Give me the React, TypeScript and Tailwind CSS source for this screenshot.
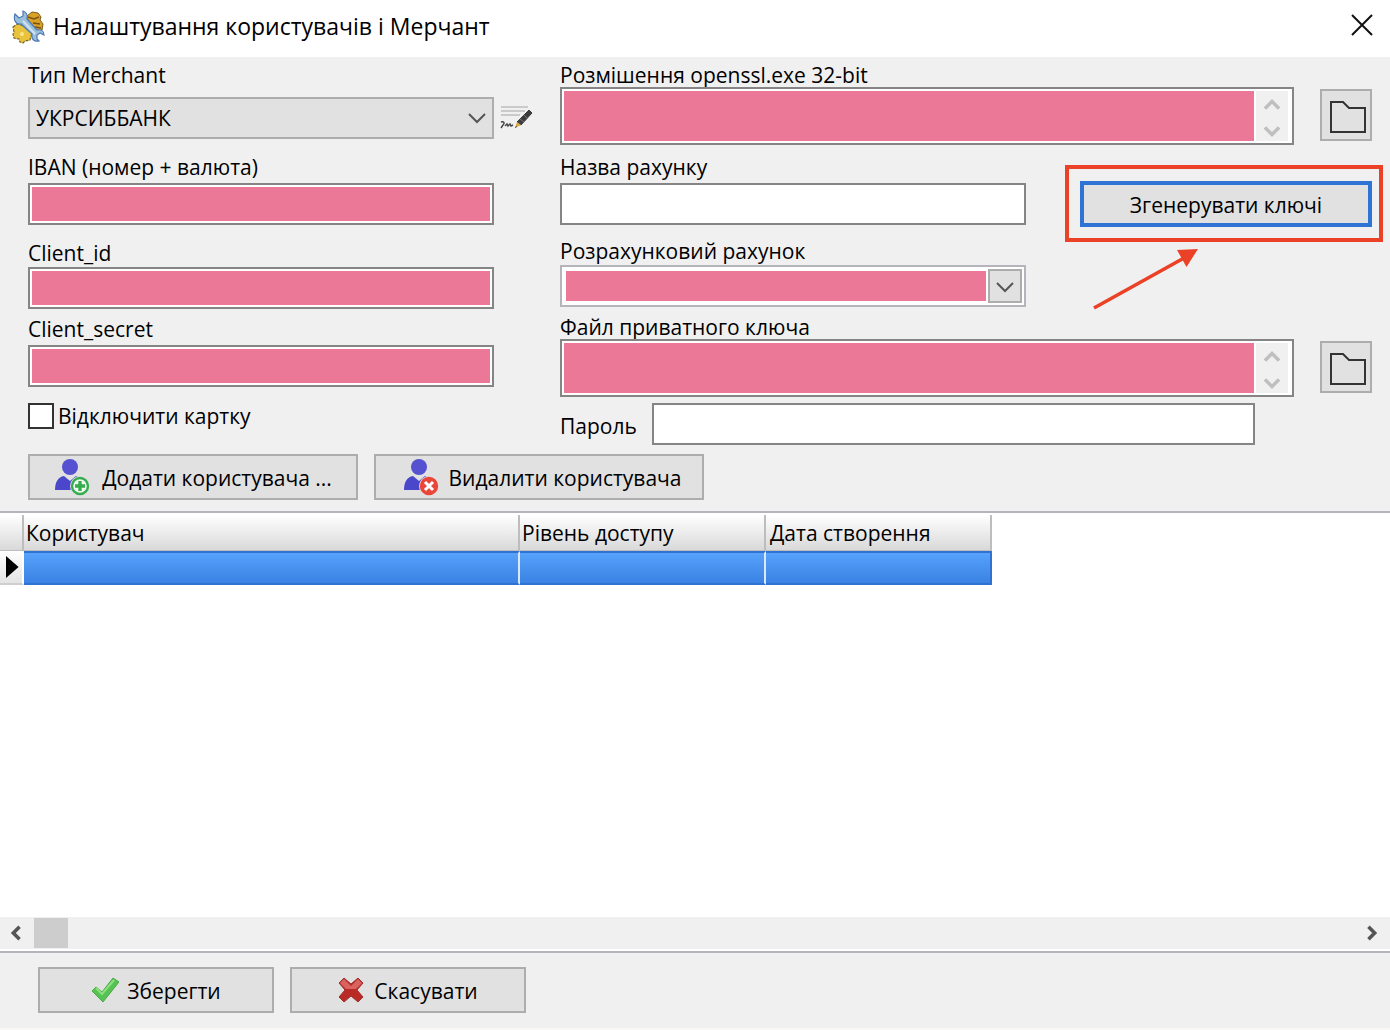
import React, { useState } from "react";

const labelClass = "block h-6 text-[21px] leading-6 whitespace-nowrap";
const fieldClass =
  "block w-full h-[42px] px-2 border-2 border-[#858585] bg-white text-[21px] focus:outline-none";
const maskedClass =
  "block w-full h-[42px] px-2 border-2 border-[#858585] bg-[#ea7896] shadow-[inset_0_0_0_2px_#fff] text-[21px] focus:outline-none";
const buttonClass =
  "flex items-center justify-center border-2 border-[#adadad] bg-[#e1e1e1] text-[21px] whitespace-nowrap";

function AppIcon() {
  return (
    <svg viewBox="0 0 34 34" className="w-[34px] h-[34px]" aria-hidden="true">
      <path d="M16 6l5-4 6 1 3 4-1 3 3 4-1 6-5 2-8-7z" fill="#d9a227" stroke="#7a5a18" strokeWidth="1" />
      <path d="M17 7l6 2 5-2M22 13l7 1M24 17l6 1" stroke="#7a5215" strokeWidth="1.5" fill="none" />
      <path d="M2 17l4-3 8 2 7 7-2 7-5 1-2 2-3-1-1-3-5-1-1-4 1-2z" fill="#e9c33c" stroke="#7b6522" strokeWidth="1.2" strokeDasharray="3 1" />
      <circle cx="11" cy="24" r="2" fill="#f8e48a" />
      <path
        d="M4 4l4 4 4-2V1c3 1 5 4 4 8l10 11c4-1 7 1 7 5l-4-2-3 2v4l2 2c-5 1-8-2-7-7L10 14c-5 1-8-4-6-10z"
        fill="#9bbfda"
        stroke="#4d79b5"
        strokeWidth="1.2"
      />
      <path d="M12 11l12 13" stroke="#cfe4ef" strokeWidth="2" />
    </svg>
  );
}

function SignIcon() {
  return (
    <svg viewBox="0 0 34 28" className="w-[34px] h-7" aria-hidden="true">
      <path d="M1 3h27M1 7h24M1 11h19" stroke="#bdbdbd" strokeWidth="1.6" />
      <path d="M1 18c3-1 4 1 2 3l-2 3M5 22l2-2 1 2 2-2 1 2 2-1" stroke="#444" strokeWidth="1.4" fill="none" />
      <path d="M29 6l3 3-11 12-4-3z" fill="#3c3c3c" stroke="#3c3c3c" strokeWidth="1" />
      <path d="M20 15l4 3M24 11l3 3" stroke="#777" strokeWidth="1" />
      <path d="M17 18l4 3-6 3z" fill="#d9a545" />
      <path d="M16 22l-1 2 2-1z" fill="#333" />
    </svg>
  );
}

function FolderIcon() {
  return (
    <svg viewBox="0 0 38 34" className="w-[38px] h-[34px]" aria-hidden="true">
      <path d="M2 2h12l6 6h16v24H2z" fill="none" stroke="#333" strokeWidth="2" />
    </svg>
  );
}

function UserIcon({ kind }: { kind: "add" | "remove" }) {
  return (
    <svg viewBox="0 0 38 40" className="w-[38px] h-10" aria-hidden="true">
      <ellipse cx="16" cy="10" rx="8" ry="8" fill="#5551d0" />
      <path d="M1 33c0-8 3-13 9-14l6 5 6-5c3 1 5 3 6 7L18 33z" fill="#4b47cb" />
      <circle cx="26" cy="29" r="10" fill="#e1e1e1" />
      <circle cx="26" cy="29" r="8" fill={kind === "add" ? "#eefaf0" : "#e8483c"} stroke={kind === "add" ? "#35ad4e" : "#ea4537"} strokeWidth="2.4" />
      {kind === "add" ? (
        <path d="M26 24v10M21 29h10" stroke="#35ad4e" strokeWidth="3.4" />
      ) : (
        <path d="M22 25l8 8M30 25l-8 8" stroke="#fff" strokeWidth="3" />
      )}
    </svg>
  );
}

function Chevron({ className, d, width = 2 }: { className: string; d: string; width?: number }) {
  return (
    <svg viewBox="0 0 18 18" className={className} fill="none" stroke="currentColor" strokeWidth={width} aria-hidden="true">
      <path d={d} />
    </svg>
  );
}

const DOWN = "M1 5l8 8 8-8";

function PathField({ id, label, value, onChange }: { id: string; label: string; value: string; onChange: (v: string) => void }) {
  return (
    <div>
      <label htmlFor={id} className={labelClass}>{label}</label>
      <div className="flex items-start gap-[26px]">
        <div className="flex flex-1 h-[58px] border-2 border-[#858585] bg-white p-0.5">
          <textarea
            id={id}
            value={value}
            onChange={(e) => onChange(e.target.value)}
            className="flex-1 h-full resize-none bg-[#ea7896] px-1 text-[21px] focus:outline-none"
          />
          <div className="flex flex-col items-center justify-between w-8 mx-0.5 pt-1.5 pb-0.5 bg-[#f0f0f0] text-[#bfbfbf]">
            <button type="button" aria-label="Вгору" className="block">
              <Chevron className="w-4 h-4" d="M1 13l8-8 8 8" width={4} />
            </button>
            <button type="button" aria-label="Вниз" className="block">
              <Chevron className="w-4 h-4" d="M1 5l8 8 8-8" width={4} />
            </button>
          </div>
        </div>
        <button type="button" aria-label="Огляд" className={`${buttonClass} w-[52px] h-[52px] mt-0.5 pl-1 pt-1`}>
          <FolderIcon />
        </button>
      </div>
    </div>
  );
}

export default function App() {
  const [merchant, setMerchant] = useState("УКРСИББАНК");
  const [iban, setIban] = useState("");
  const [clientId, setClientId] = useState("");
  const [clientSecret, setClientSecret] = useState("");
  const [cardDisabled, setCardDisabled] = useState(false);
  const [opensslPath, setOpensslPath] = useState("");
  const [accountName, setAccountName] = useState("");
  const [account, setAccount] = useState("");
  const [keyPath, setKeyPath] = useState("");
  const [password, setPassword] = useState("");

  return (
    <div className="flex flex-col min-h-screen bg-[#f0f0f0] text-black font-['Open_Sans','Noto_Sans',sans-serif]">
      <header className="flex items-center justify-between h-[57px] pl-[11px] pr-4 pb-1 bg-white">
        <div className="flex items-center gap-2">
          <AppIcon />
          <h1 className="text-[23px]">Налаштування користувачів і Мерчант</h1>
        </div>
        <button type="button" aria-label="Закрити" className="mb-1">
          <svg viewBox="0 0 24 24" className="w-6 h-6" stroke="#111" strokeWidth="2" aria-hidden="true">
            <path d="M2 2l20 20M22 2L2 22" />
          </svg>
        </button>
      </header>

      <section className="pt-1.5 pb-[11px]">
        <div className="grid grid-cols-[504fr_812fr] gap-7 pl-7 pr-[18px]">
          <div className="pr-[38px]">
            <label htmlFor="merchant" className={labelClass}>Тип Merchant</label>
            <div className="flex items-center gap-1.5 mt-2.5 -mr-[38px]">
              <div className="relative flex-1">
                <select
                  id="merchant"
                  value={merchant}
                  onChange={(e) => setMerchant(e.target.value)}
                  className="block w-full h-[42px] pl-1.5 pt-0.5 appearance-none border-2 border-[#adadad] bg-[#e1e1e1] text-[21px] focus:outline-none"
                >
                  <option value="УКРСИББАНК">УКРСИББАНК</option>
                </select>
                <Chevron className="absolute right-2 top-3 w-[18px] h-[18px] text-[#555] pointer-events-none" d={DOWN} />
              </div>
              <button type="button" aria-label="Підпис" className="w-8">
                <SignIcon />
              </button>
            </div>

            <label htmlFor="iban" className={`${labelClass} mt-4 mb-1`}>IBAN (номер + валюта)</label>
            <input id="iban" value={iban} onChange={(e) => setIban(e.target.value)} className={maskedClass} />

            <label htmlFor="client-id" className={`${labelClass} mt-4 mb-0.5`}>Client_id</label>
            <input id="client-id" value={clientId} onChange={(e) => setClientId(e.target.value)} className={maskedClass} />

            <label htmlFor="client-secret" className={`${labelClass} mt-2 mb-1`}>Client_secret</label>
            <input id="client-secret" value={clientSecret} onChange={(e) => setClientSecret(e.target.value)} className={maskedClass} />

            <label className="flex items-center gap-1 mt-4 text-[21px] leading-[26px]">
              <input
                type="checkbox"
                checked={cardDisabled}
                onChange={(e) => setCardDisabled(e.target.checked)}
                className="w-[26px] h-[26px] appearance-none border-2 border-[#333] bg-white checked:bg-[#333]"
              />
              Відключити картку
            </label>
          </div>

          <div>
            <PathField id="openssl" label="Розмішення openssl.exe 32-bit" value={opensslPath} onChange={setOpensslPath} />

            <label htmlFor="account-name" className={`${labelClass} mt-2.5 mb-1`}>Назва рахунку</label>
            <div className="flex items-center gap-[54px] h-[42px]">
              <div className="flex-[466_1_0%]">
                <input id="account-name" value={accountName} onChange={(e) => setAccountName(e.target.value)} className={fieldClass} />
              </div>
              <div className="relative flex-[292_1_0%]">
                <button type="button" className="w-full h-[46px] pt-1 border-4 border-[#2f74d4] bg-[#e1e1e1] text-[21px]">
                  Згенерувати ключі
                </button>
                <div className="absolute -top-4 -bottom-[15px] -left-[15px] -right-[11px] border-4 border-[#eb4227] pointer-events-none" />
                <svg viewBox="0 0 110 66" className="absolute left-3 top-[66px] w-[110px] h-[66px] pointer-events-none" aria-hidden="true">
                  <path d="M2 61L92 11" stroke="#eb4227" strokeWidth="3.6" />
                  <path d="M106 2L85 3l9.500 17z" fill="#eb4227" />
                </svg>
              </div>
            </div>

            <label htmlFor="account" className={`${labelClass} mt-3.5 mb-0.5`}>Розрахунковий рахунок</label>
            <div className="grid grid-cols-[466fr_292fr] gap-[54px]">
              <div className="flex h-[42px] gap-0.5 border-2 border-[#b4b4ba] bg-white p-0.5">
                <input
                  id="account"
                  value={account}
                  onChange={(e) => setAccount(e.target.value)}
                  className="flex-1 min-w-0 m-0.5 mr-0 px-1 bg-[#ea7896] text-[21px] focus:outline-none"
                />
                <button type="button" aria-label="Обрати рахунок" className={`${buttonClass} w-[34px] pt-0.5 text-[#555]`}>
                  <Chevron className="w-[18px] h-[18px]" d={DOWN} />
                </button>
              </div>
            </div>

            <div className="mt-2">
              <PathField id="key-file" label="Файл приватного ключа" value={keyPath} onChange={setKeyPath} />
            </div>

            <div className="flex items-center mt-1.5 pr-[117px]">
              <label htmlFor="password" className="w-[92px] pt-1.5 text-[21px]">Пароль</label>
              <input
                id="password"
                type="password"
                value={password}
                onChange={(e) => setPassword(e.target.value)}
                className={`${fieldClass} flex-1`}
              />
            </div>
          </div>
        </div>

        <div className="flex gap-4 mt-[9px] pl-7">
          <button type="button" className={`${buttonClass} w-[330px] h-[46px] gap-2.5`}>
            <UserIcon kind="add" />
            <span className="pt-1">Додати користувача ...</span>
          </button>
          <button type="button" className={`${buttonClass} w-[330px] h-[46px] gap-2 pl-1.5`}>
            <UserIcon kind="remove" />
            <span className="pt-1">Видалити користувача</span>
          </button>
        </div>
      </section>

      <section className="flex flex-col flex-1 border-y-2 border-[#b4b4ba] bg-white">
        <div className="flex-1 pt-0.5">
          <table className="w-[992px] table-fixed border-separate border-spacing-0 text-[21px]">
            <thead>
              <tr className="h-9 bg-linear-to-b from-white to-[#d8d8d8] text-left">
                <th className="w-6 border-r-2 border-b border-[#bdbdbd]" aria-label="Позначка" />
                <th className="w-[496px] px-0.5 py-0 border-r-2 border-b border-[#bdbdbd] font-normal leading-8">Користувач</th>
                <th className="w-[246px] px-0.5 py-0 border-r-2 border-b border-[#bdbdbd] font-normal leading-8">Рівень доступу</th>
                <th className="px-1 py-0 border-r-2 border-b border-[#bdbdbd] font-normal leading-8">Дата створення</th>
              </tr>
            </thead>
            <tbody>
              <tr className="h-[34px]">
                <td className="p-0 border-b-2 border-r-2 border-b-[#cfcfcf] border-r-white bg-linear-to-b from-white to-[#e4e4e4]">
                  <svg viewBox="0 0 10 24" className="ml-1.5 w-3.5 h-6" preserveAspectRatio="none" aria-hidden="true">
                    <path d="M0 1l9 11-9 11z" />
                  </svg>
                </td>
                <td className="border-y-2 border-r-2 border-y-[#2f72d2] border-r-[#dbe8fa] bg-linear-to-b from-[#57a2fa] to-[#3a82e4]" />
                <td className="border-y-2 border-r-2 border-y-[#2f72d2] border-r-[#dbe8fa] bg-linear-to-b from-[#57a2fa] to-[#3a82e4]" />
                <td className="border-y-2 border-r-2 border-y-[#2f72d2] border-r-[#2f72d2] bg-linear-to-b from-[#57a2fa] to-[#3a82e4]" />
              </tr>
            </tbody>
          </table>
        </div>
        <div className="flex items-center h-8 mb-0.5 pl-2 pr-2.5 bg-[#f0f0f0] text-[#555]">
          <button type="button" aria-label="Ліворуч">
            <Chevron className="w-4 h-4" d="M13 2L6 9l7 7" width={4} />
          </button>
          <div className="w-[34px] h-[30px] ml-2.5 bg-[#cdcdcd]" />
          <button type="button" aria-label="Праворуч" className="ml-auto">
            <Chevron className="w-4 h-4" d="M5 2l7 7-7 7" width={4} />
          </button>
        </div>
      </section>

      <footer className="flex gap-4 pl-[38px] pt-3.5 pb-[15px] border-b-2 border-[#faf6f3]">
        <button type="button" className={`${buttonClass} w-[236px] h-[46px] gap-2`}>
          <svg viewBox="0 0 28 26" className="w-7 h-[26px]" aria-hidden="true">
            <path d="M1 14l4-4 6 5L22 1l6 4-16 20z" fill="#57c254" stroke="#47ad45" strokeWidth="1" />
            <path d="M5 11l6 6L23 3" stroke="#8be07c" strokeWidth="2" fill="none" />
          </svg>
          <span className="pt-1">Зберегти</span>
        </button>
        <button type="button" className={`${buttonClass} w-[236px] h-[46px] gap-2.5`}>
          <svg viewBox="0 0 26 26" className="w-[26px] h-[26px]" aria-hidden="true">
            <path d="M6 1l7 6 7-6 5 5-6 7 6 7-5 5-7-6-7 6-5-5 6-7-6-7z" fill="#b92a26" stroke="#9e3230" strokeWidth="1" />
            <path d="M6 2l7 7 7-7 4 4-6 6H8L2 6z" fill="#d9635f" />
          </svg>
          <span className="pt-1">Скасувати</span>
        </button>
      </footer>
    </div>
  );
}
